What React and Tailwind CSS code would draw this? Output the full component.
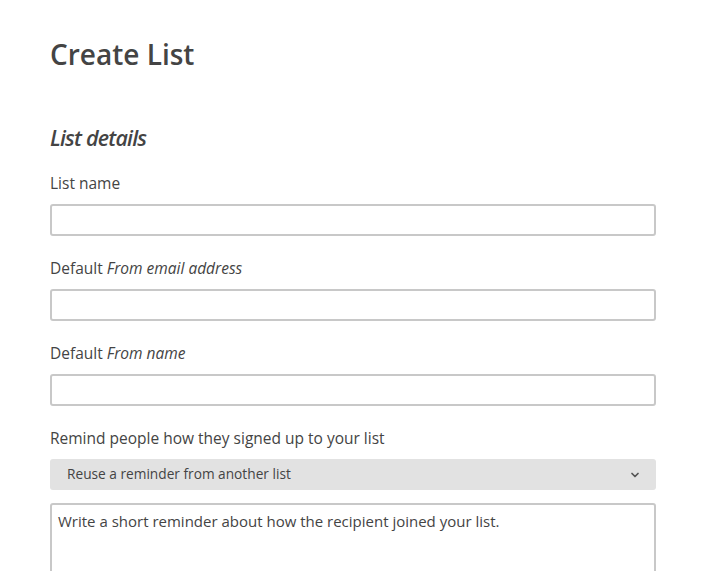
import { ChevronDown } from 'lucide-react'

function Field({ label, children }) {
  return (
    <div className="mb-[21px]">
      <label className="block text-[15.5px] leading-[22px] text-[#444] mb-[10px]">{label}</label>
      {children}
    </div>
  )
}

export default function App() {
  return (
    <div className="min-h-screen bg-white px-[50px] pt-[34px] text-[#444]" style={{ fontFamily: '"Open Sans", sans-serif' }}>
      <h1 className="text-[28px] leading-[40px] font-semibold text-[#444]">Create List</h1>
      <h2 className="mt-[49px] text-[21.5px] leading-[30px] italic font-semibold tracking-[-0.8px] text-[#444]">List details</h2>
      <div className="mt-[19px] w-[606px]">
        <Field label="List name">
          <input className="block w-full h-[32px] border-2 border-[#c8c8c8] rounded-[3px] bg-white" />
        </Field>
        <Field label={<>Default <em>From email address</em></>}>
          <input className="block w-full h-[32px] border-2 border-[#c8c8c8] rounded-[3px] bg-white" />
        </Field>
        <Field label={<>Default <em>From name</em></>}>
          <input className="block w-full h-[32px] border-2 border-[#c8c8c8] rounded-[3px] bg-white" />
        </Field>
        <div>
          <label className="block text-[15.5px] leading-[22px] text-[#444] mb-[10px]">Remind people how they signed up to your list</label>
          <div className="flex items-center justify-between h-[31px] bg-[#e2e2e2] rounded-[3px] pl-[17px] pr-[15px]">
            <span className="text-[13.7px] text-[#444]">Reuse a reminder from another list</span>
            <ChevronDown className="h-[12px] w-[12px] text-[#555]" strokeWidth={3.5} />
          </div>
          <textarea
            className="mt-[13px] block w-full h-[80px] border-2 border-[#c8c8c8] rounded-[3px] px-[6px] py-[5px] text-[15px] leading-[22px] text-[#444] outline-none resize-y"
            defaultValue="Write a short reminder about how the recipient joined your list."
          />
        </div>
      </div>
    </div>
  )
}
